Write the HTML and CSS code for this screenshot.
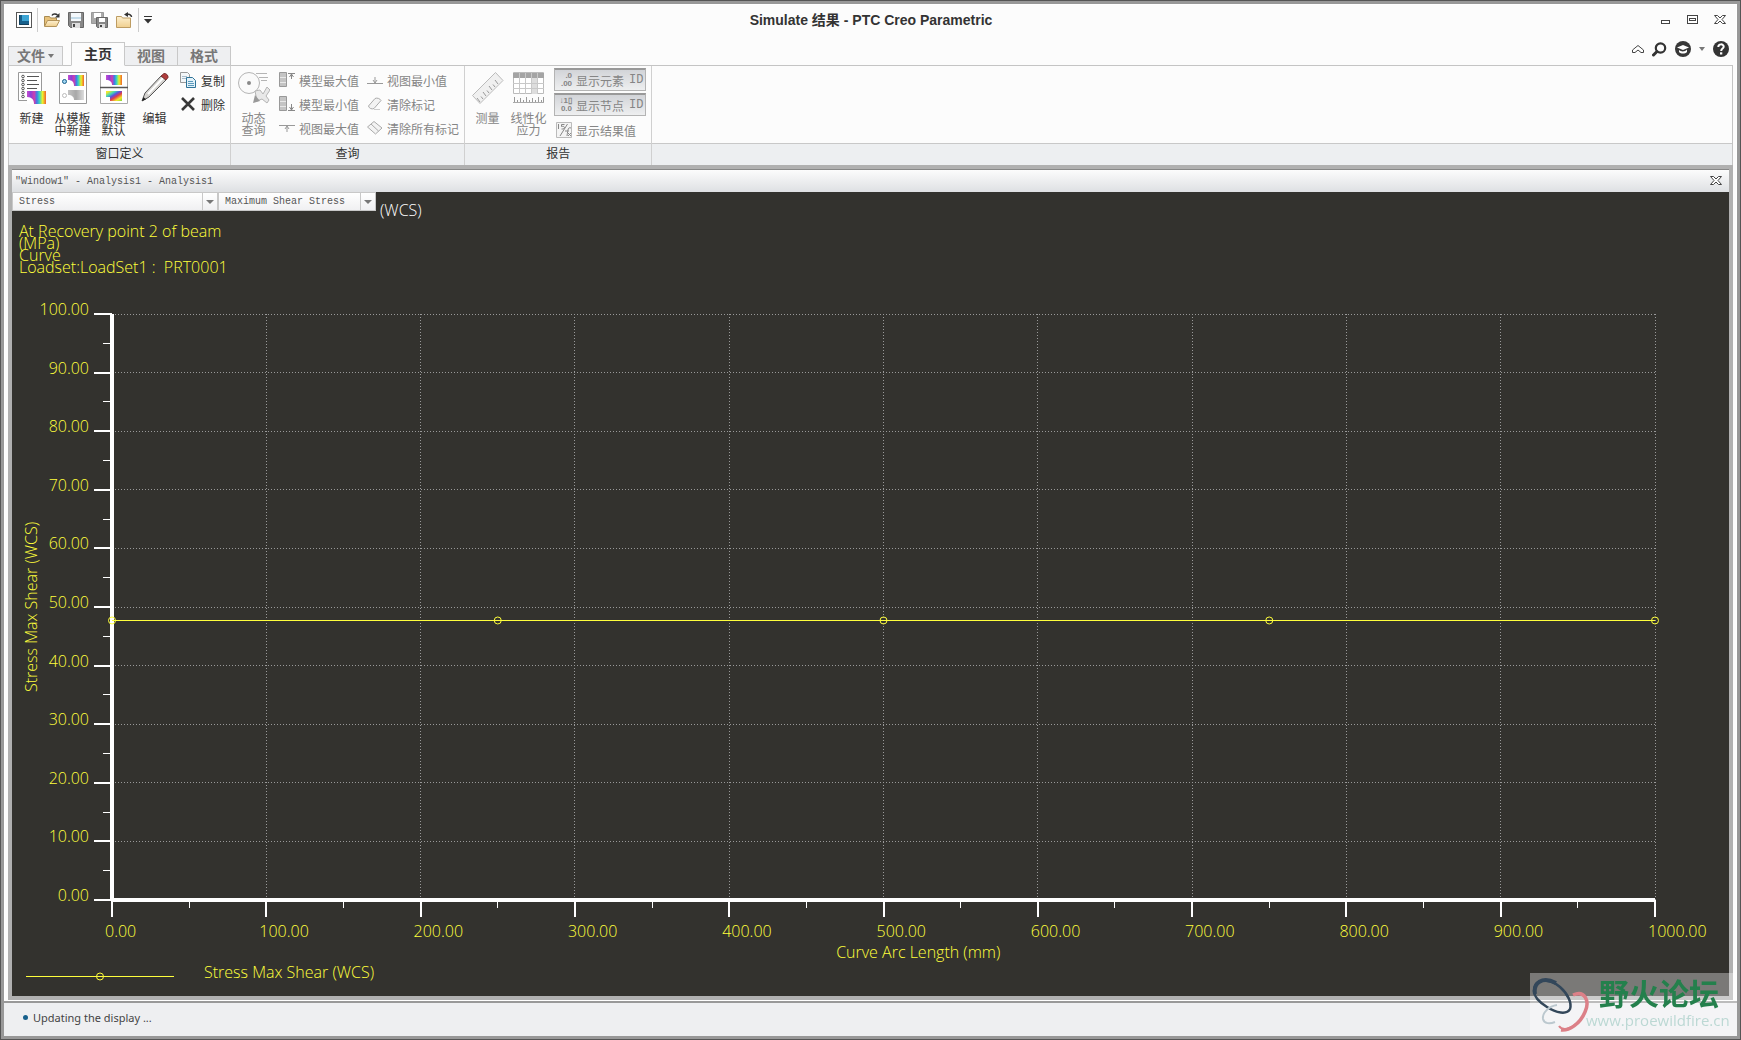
FILE: index.html
```
<!DOCTYPE html>
<html lang="zh-CN">
<head>
    <meta charset="UTF-8">
    <meta name="viewport" content="width=device-width, initial-scale=1.0">
    <title>Simulate 结果 - PTC Creo Parametric</title>
    <link rel="stylesheet" href="styles.css">
</head>
<body>
    <svg class="defs" width="0" height="0" aria-hidden="true">
        <defs>
            <linearGradient id="rainbow" x1="0" y1="0" x2="1" y2="0">
                <stop offset="0" stop-color="#c84fd0"/>
                <stop offset=".2" stop-color="#8a3fd8"/>
                <stop offset=".38" stop-color="#d23cae"/>
                <stop offset=".52" stop-color="#3f7be8"/>
                <stop offset=".66" stop-color="#3fd6b8"/>
                <stop offset=".82" stop-color="#eef02c"/>
                <stop offset="1" stop-color="#f0622c"/>
            </linearGradient>
            <linearGradient id="rainbowTilt" x1="0" y1="0" x2="1" y2="1">
                <stop offset=".1" stop-color="#f4e62c"/>
                <stop offset=".3" stop-color="#3fd6b8"/>
                <stop offset=".45" stop-color="#5a4fe0"/>
                <stop offset=".6" stop-color="#e03c4c"/>
                <stop offset=".8" stop-color="#f4e62c"/>
                <stop offset="1" stop-color="#7fd63c"/>
            </linearGradient>
            <linearGradient id="grayFringe">
                <stop offset="0" stop-color="#c4c4c4"/>
                <stop offset=".5" stop-color="#a8a8a8"/>
                <stop offset="1" stop-color="#dcdcdc"/>
            </linearGradient>
            <linearGradient id="folder" x1="0" y1="0" x2="0" y2="1">
                <stop offset="0" stop-color="#fdf0d0"/>
                <stop offset="1" stop-color="#f0cf8e"/>
            </linearGradient>
        </defs>
    </svg>

    <div class="app">
        <header class="titlebar">
            <div class="quick">
                <button class="tool" aria-label="窗口"><svg width="16" height="16"><rect x=".5" y=".5" width="15" height="15" fill="#fff" stroke="#555"/><rect x="3" y="3" width="10" height="10" fill="#17608c"/><path d="M6 3h7v6H6z" fill="#3ba4d4"/><path d="M3.500 3v9.500H13" stroke="#14405c" fill="none"/></svg></button>
                <span class="sep"></span>
                <button class="tool" aria-label="打开"><svg width="18" height="16"><path d="M1.500 14V4.500h5l1 1.500h6v2" fill="#e8c27a" stroke="#a98b52"/><path d="M1.500 14.500l3-6h12l-3 6z" fill="url(#folder)" stroke="#b3935a"/><path d="M9 3.500c1-2 4-2 5.500-.5" fill="none" stroke="#333" stroke-width="1.500"/><path d="M16.500 1v4.500h-4.500z" fill="#333"/></svg></button>
                <button class="tool" aria-label="保存"><svg width="16" height="16"><path d="M.5.500h15v15h-13l-2-2z" fill="#888" stroke="#666"/><path d="M3 1h10v8H3z" fill="#f5f9fc"/><path d="M3 5h10v2H3z" fill="#c5dcea"/><path d="M4 11h8v5H4z" fill="#ddd"/><path d="M5 12h2v3H5z" fill="#444"/></svg></button>
                <button class="tool" aria-label="保存副本"><svg width="18" height="16"><path d="M.5.500h12v11H.500z" fill="#aaa" stroke="#999"/><path d="M3 1h7v5H3z" fill="#fff"/><path d="M5.500 5.500h11v10h-10l-1-1z" fill="#888" stroke="#666"/><path d="M8 6h6v4H8z" fill="#fff"/><path d="M8 12h6v4H8z" fill="#ddd"/><path d="M9 13h2v2H9z" fill="#444"/></svg></button>
                <button class="tool" aria-label="关闭文件"><svg width="17" height="16"><path d="M.5 15.500V4.500h5l1 1.500h8v9.500z" fill="url(#folder)" stroke="#bd9c62"/><path d="M15.500 5c0-2-2-3-4-2.500" fill="none" stroke="#333" stroke-width="1.500"/><path d="M12 0v5L8 2.500z" fill="#333"/></svg></button>
                <span class="sep"></span>
                <button class="tool" aria-label="自定义"><svg width="8" height="8"><path d="M0 .5h8" stroke="#333"/><path d="M0 3h8L4 7.500z" fill="#333"/></svg></button>
            </div>
            <h1>Simulate 结果 - PTC Creo Parametric</h1>
            <div class="window-buttons">
                <button aria-label="最小化"><svg width="11" height="10"><rect x="1.500" y="5.500" width="8" height="3" fill="#fff" stroke="#444"/></svg></button>
                <button aria-label="最大化"><svg width="11" height="10"><rect x=".5" y=".5" width="10" height="8" fill="#fff" stroke="#444"/><rect x="2.500" y="3.500" width="6" height="2" fill="none" stroke="#444"/></svg></button>
                <button aria-label="关闭"><svg width="12" height="10"><path d="M.5.500h3L6 3 8.500.500h3L8 4.500l3.500 4h-3L6 6 3.500 8.500h-3l3.500-4z" fill="#fff" stroke="#444"/></svg></button>
            </div>
        </header>

        <nav class="tabs">
            <button class="tab file">文件<span class="caret"></span></button>
            <button class="tab active">主页</button>
            <button class="tab">视图</button>
            <button class="tab">格式</button>
            <div class="help">
                <button aria-label="折叠功能区"><svg width="12" height="9"><path d="M.5 5L6 .500 11.500 5v2.500H9L6 5 3 7.500H.500z" fill="#fff" stroke="#444"/></svg></button>
                <button aria-label="搜索"><svg width="15" height="15"><circle cx="8.500" cy="6" r="4.700" fill="none" stroke="#333" stroke-width="2.200"/><path d="M5 9.500L1.500 13" stroke="#333" stroke-width="3" stroke-linecap="round"/></svg></button>
                <button aria-label="学习"><svg width="16" height="16"><circle cx="8" cy="8" r="8" fill="#383838"/><path d="M2 6.500L8 4l6 2.500L8 9z" fill="#fff"/><path d="M4 9c2 2 6 2 8-.500v2.500c-2 2-6 2-8 0z" fill="#fff"/></svg></button>
                <button aria-label="更多"><span class="caret"></span></button>
                <button aria-label="帮助"><svg width="16" height="16"><circle cx="8" cy="8" r="8" fill="#333"/><path d="M5.300 6c0-3.500 5.400-3.400 5.400-.3C10.700 7.700 8.200 7.500 8.200 10" fill="none" stroke="#fff" stroke-width="2"/><rect x="7" y="11.300" width="2.300" height="2.200" fill="#fff"/></svg></button>
            </div>
        </nav>

        <section class="ribbon">
            <div class="group">
                <div class="tools">
                    <button class="big"><svg width="28" height="32"><path d="M.5.500h23v28H.500z" fill="#fff" stroke="#999"/><g fill="none" stroke="#555"><circle cx="5" cy="4.500" r="1.300"/><circle cx="5" cy="8.500" r="1.300"/><circle cx="5" cy="12.500" r="1.300"/><circle cx="5" cy="16.500" r="1.300"/><circle cx="5" cy="20.500" r="1.300"/><circle cx="5" cy="24.500" r="1.300"/><path d="M9 4.500h12M9 8.500h10M9 12.500h12M9 16.500h10M9 20.500h4"/></g><path d="M9 19h19v13H9z" fill="url(#rainbow)"/><path d="M9 32v-7c5 0 7 3 7 7z" fill="#fff"/></svg><span>新建</span></button>
                    <button class="big"><svg width="28" height="32"><path d="M.5.500h27v31H.500z" fill="#fff" stroke="#999"/><circle cx="5.500" cy="9.500" r="2" fill="#9fd4f0" stroke="#17608c"/><circle cx="5.500" cy="23.500" r="2" fill="#fff" stroke="#bbb"/><path d="M9 3h16v11H9z" fill="url(#rainbow)"/><path d="M9 14V8c4 0 6 2 6 6z" fill="#fff"/><path d="M9 18h16v10H9z" fill="url(#grayFringe)"/><path d="M9 28v-5c4 0 6 2 6 5z" fill="#fff"/></svg><span>从模板<br>中新建</span></button>
                    <button class="big"><svg width="28" height="32"><path d="M.5.500h27v31H.500z" fill="#fff" stroke="#aaa"/><path d="M0 15.500h28" stroke="#555" stroke-width="1.500"/><path d="M6 3h16v10H6z" fill="url(#rainbow)"/><path d="M6 13V8c4 0 6 2 6 5z" fill="#fff"/><path d="M6 19h16v10H6z" fill="url(#rainbowTilt)"/><path d="M6 29v-4h4v4z" fill="#fff"/></svg><span>新建<br>默认</span></button>
                    <button class="big"><svg width="28" height="32"><path d="M1 29l3-8L20 4l5 4L8 25z" fill="#d4d2cf" stroke="#555"/><path d="M7 22L22 6" stroke="#fff" stroke-width="2"/><path d="M20 4l3-2.500c2-.5 4.500 2 4 4L25 8z" fill="#b03c3c" stroke="#7c3434"/><path d="M1 29l1.500-4 2.500 2.500z" fill="#222"/></svg><span>编辑</span></button>
                    <div class="column">
                        <button class="small"><svg width="17" height="17"><path d="M.5.500h7l2 2v8h-9z" fill="#f4f7f9" stroke="#999"/><path d="M2 4.500h5M2 6.500h5" stroke="#a8bccb"/><path d="M6.500 5.500h6l3 3v7h-9z" fill="#e2f1f9" stroke="#2f7398"/><path d="M8 9.500h5M8 11.500h6M8 13.500h6" stroke="#5b9abc"/></svg>复制</button>
                        <button class="small"><svg width="17" height="16"><path d="M2 2l12 12M14 2L2 14" stroke="#383838" stroke-width="2.600"/></svg>删除</button>
                    </div>
                </div>
                <div class="caption">窗口定义</div>
            </div>

            <div class="group query">
                <div class="tools">
                    <button class="big" disabled><svg width="32" height="32"><circle cx="11" cy="11" r="10.500" fill="#fafafa" stroke="#b5b5b5"/><circle cx="11" cy="11" r="2" fill="#888"/><path d="M18 1.500h11M21 5.500h9M23 8.500h6" stroke="#b5b5b5"/><path d="M17 19l5-1 3 4 4-7 3 3-4 6 3 4-2 3-5-4-5 2z" fill="#e8e8e8" stroke="#b5b5b5"/><path d="M15 31l2-8 5 6z" fill="#999"/></svg><span>动态<br>查询</span></button>
                    <div class="column">
                        <button class="small" disabled><svg width="16" height="16"><path d="M.5.500h7v14h-7z" fill="#c4c4c4" stroke="#999"/><path d="M1 5.500h6M1 10.500h6" stroke="#e8e8e8"/><path d="M9 1.500h7M12.500 2v5M10.500 5l2-3 2 3" fill="none" stroke="#888"/></svg>模型最大值</button>
                        <button class="small" disabled><svg width="16" height="16"><path d="M.5.500h7v14h-7z" fill="#c4c4c4" stroke="#999"/><path d="M1 5.500h6M1 10.500h6" stroke="#e8e8e8"/><path d="M9 14.500h7M12.500 8v6M10.500 11l2 3 2-3" fill="none" stroke="#888"/></svg>模型最小值</button>
                        <button class="small" disabled><svg width="16" height="12"><path d="M0 3.500h16M8 4v6M6 7l2-3 2 3" fill="none" stroke="#999"/></svg>视图最大值</button>
                    </div>
                    <div class="column">
                        <button class="small" disabled><svg width="16" height="12"><path d="M0 9.500h16M8 3v6M6 6l2 3 2-3" fill="none" stroke="#999"/></svg>视图最小值</button>
                        <button class="small" disabled><svg width="16" height="16"><path d="M1.500 10L8 2.500c2-1 5 0 6 2L7 12.500c-2 1-5 0-5.500-2.500z" fill="#f3f3f3" stroke="#aaa"/><path d="M7 13.500h6" stroke="#ccc"/></svg>清除标记</button>
                        <button class="small" disabled><svg width="16" height="16"><path d="M.5 7L7 1.500 15 8l-6.500 6z" fill="#f3f3f3" stroke="#aaa"/><path d="M4 4l7.500 7" stroke="#aaa"/></svg>清除所有标记</button>
                    </div>
                </div>
                <div class="caption">查询</div>
            </div>

            <div class="group">
                <div class="tools">
                    <button class="big" disabled><svg width="32" height="32"><path d="M.5 23.500l23-23 7.500 8-23 23z" fill="#f0f0f0" stroke="#bbb"/><path d="M8 30l-3-4M11 27l-2-2.500M14 24l-3-4M17 21l-2-2.500M20 18l-3-4M23 15l-2-2.500M26 12l-3-4" stroke="#999"/></svg><span>测量</span></button>
                    <button class="big" disabled><svg width="32" height="32"><path d="M.5.500h30v21H.500z" fill="#fff" stroke="#bbb"/><path d="M19 6h6v16h-6z" fill="#ddd"/><path d="M0 1h31v5H0z" fill="#a4a4a4"/><path d="M0 11.500h31M0 16.500h31M6.500 1v21M12.500 1v21M18.500 1v21M24.500 1v21" stroke="#c8c8c8"/><path d="M0 30.500h31" stroke="#aaa"/><path d="M1.500 25v5M4.500 28v2M7.500 26v4M10.500 28v2M13.500 25v5M16.500 28v2M19.500 26v4M22.500 28v2M25.500 25v5M28.500 28v2M30.500 25v5" stroke="#999"/></svg><span>线性化<br>应力</span></button>
                    <div class="column">
                        <button class="small toggle" disabled><span class="digits">.0<br>.00</span>显示元素<span class="id">ID</span></button>
                        <button class="small toggle" disabled><span class="digits">↓1▯<br>0.0</span>显示节点<span class="id">ID</span></button>
                        <button class="small plain" disabled><svg width="16" height="16"><path d="M.5.500h15v15H.500z" fill="#f4f4f4" stroke="#bbb"/><path d="M2.500 2v5M8.500 2.500H5.500v2c4-1 4 3 0 2.500M11.500 2L4 14M15 6c-3-1-3 1-4 8M9 9h4M12 11l3 3M15 11l-3 3" fill="none" stroke="#888"/></svg>显示结果值</button>
                    </div>
                </div>
                <div class="caption">报告</div>
            </div>
            <div class="group rest"><div class="tools"></div><div class="caption"></div></div>
        </section>

        <main class="workspace">
            <div class="result">
                <div class="result-title">
                    <h2>"Window1" - Analysis1 - Analysis1</h2>
                    <button aria-label="关闭窗口"><svg width="12" height="10"><path d="M.5.500h3L6 3 8.500.500h3L8 4.500l3.500 4h-3L6 6 3.500 8.500h-3l3.500-4z" fill="#fff" stroke="#444"/></svg></button>
                </div>
                <div class="canvas">
                    <div class="pickers">
                        <div class="picker quantity"><select aria-label="Quantity"><option>Stress</option></select></div>
                        <div class="picker component"><select aria-label="Component"><option>Maximum Shear Stress</option></select></div>
                        <span class="wcs">(WCS)</span>
                    </div>
                    <div class="info">At Recovery point 2 of beam<br>(MPa)<br>Curve<br>Loadset:LoadSet1 :&nbsp; PRT0001</div>
                    <div class="chart">
                        <div class="y-title">Stress Max Shear (WCS)</div>
                        <svg class="plot" id="plot"></svg>
                    </div>
                    <div class="x-title">Curve Arc Length (mm)</div>
                    <div class="legend">
                        <svg width="148" height="9"><path d="M0 4.500h148" stroke="#ffff3c"/><circle cx="74" cy="4.500" r="3.500" fill="none" stroke="#ffff3c"/></svg>
                        <span>Stress Max Shear (WCS)</span>
                    </div>
                </div>
            </div>
        </main>

        <footer class="status"><span class="dot"></span>Updating the display ...</footer>
    </div>

    <div class="watermark">
        <svg width="58" height="56" viewBox="0 0 58 56" fill="none"><path d="M2 14C2 2 16 0 28 10c8 7 12 16 10 22-3 6-14 4-23-2C7 25 2 20 2 14z" stroke="#33475a" stroke-width="2.500"/><path d="M3 17C1 6 10-1 24 6" stroke="#33475a" stroke-width="4"/><path d="M41 18c12-5 17 6 12 17-5 12-16 19-24 18" stroke="#dc8088" stroke-width="3.500"/><path d="M27 49c3 5 12 3 17-2" stroke="#dc8088" stroke-width="2"/><path d="M25 28c-8 1-15 8-14 14 1 5 7 5 12 3" stroke="#bcc8cf" stroke-width="2"/></svg>
        <div class="brand"><strong>野火论坛</strong><span>www.proewildfire.cn</span></div>
    </div>

    <script>
        const points = [[0, 47.7], [250, 47.7], [500, 47.7], [750, 47.7], [1000, 47.7]];
        const maxX = 1000;
        const maxY = 100;
        let svg = '';

        // each tick is a nested svg, so its marks keep their size when the plot stretches
        for (let v = 0; v <= maxX; v += 50) {
            const x = v / maxX * 100 + '%';
            if (v % 100 === 0) {
                if (v > 0) svg += `<line class="grid" x1="${x}" x2="${x}" y1="0" y2="100%"/>`;
                svg += `<svg x="${x}" y="100%"><line class="major" y2="17"/><text x="-7" y="37">${v.toFixed(2)}</text></svg>`;
            } else {
                svg += `<svg x="${x}" y="100%"><line class="minor" y2="8"/></svg>`;
            }
        }
        for (let v = 0; v <= maxY; v += 5) {
            const y = 100 - v / maxY * 100 + '%';
            if (v % 10 === 0) {
                if (v > 0) svg += `<line class="grid" x1="0" x2="100%" y1="${y}" y2="${y}"/>`;
                svg += `<svg y="${y}"><line class="major" x1="-18"/><text class="y-label" x="-23" y="1">${v.toFixed(2)}</text></svg>`;
            } else {
                svg += `<svg y="${y}"><line class="minor" x1="-9"/></svg>`;
            }
        }
        svg += '<line class="axis" x1="0" x2="0" y1="0" y2="100%"/>';
        svg += '<line class="axis" x1="0" x2="100%" y1="100%" y2="100%"/>';

        points.forEach((p, i) => {
            const x = p[0] / maxX * 100 + '%';
            const y = 100 - p[1] / maxY * 100 + '%';
            const next = points[i + 1];
            if (next) {
                svg += `<line class="curve" x1="${x}" y1="${y}" x2="${next[0] / maxX * 100}%" y2="${100 - next[1] / maxY * 100}%"/>`;
            }
            svg += `<circle class="point" cx="${x}" cy="${y}" r="3.5"/>`;
        });
        document.getElementById('plot').innerHTML = svg;
    </script>
</body>
</html>
```
FILE: styles.css
```
* {
    box-sizing: border-box;
}

body {
    margin: 0;
    font-family: "Liberation Sans", "Noto Sans CJK SC", sans-serif;
    font-size: 12px;
    color: #333;
}

button {
    font: inherit;
    color: inherit;
    background: none;
    border: none;
    padding: 0;
}

svg {
    display: block;
    flex: none;
}

.defs {
    position: absolute;
}

.app {
    display: flex;
    flex-direction: column;
    min-height: 100vh;
    background: #fcfcfc;
    border: 4px solid #989898;
    box-shadow: inset 0 0 0 1px #fff;
    outline: 1px solid #555;
    outline-offset: -1px;
}

/* title bar */
.titlebar {
    display: grid;
    grid-template-columns: 1fr auto 1fr;
    align-items: center;
    height: 32px;
    padding: 0 11px 0 12px;
}

.titlebar h1 {
    margin: 0;
    font-size: 14px;
    font-weight: bold;
    line-height: 20px;
}

.quick {
    display: flex;
    align-items: center;
    gap: 7px;
}

.sep {
    width: 1px;
    height: 24px;
    margin: 0 -2px;
    background: #ccc;
}

.window-buttons {
    display: flex;
    justify-content: flex-end;
    gap: 16px;
}

/* tabs */
.tabs {
    display: flex;
    align-items: flex-end;
    height: 30px;
    padding: 0 4px;
    position: relative;
    z-index: 1;
}

.tab {
    height: 20px;
    padding: 0 12px;
    font-size: 14px;
    font-weight: bold;
    line-height: 18px;
    color: #777;
    background: #eeeff1;
    border: 1px solid #c8c8c8;
    border-left: none;
}

.tab.file {
    display: flex;
    align-items: center;
    gap: 3px;
    padding: 0 8px;
    margin-right: 8px;
    border-left: 1px solid #c8c8c8;
}

.tab.active {
    height: 24px;
    line-height: 22px;
    color: #333;
    background: #fcfcfc;
    border-left: 1px solid #c8c8c8;
    border-bottom-color: #fcfcfc;
}

.caret {
    display: block;
    border: 3px solid transparent;
    border-top: 4px solid #777;
    border-bottom: none;
}

.help {
    display: flex;
    align-items: center;
    gap: 8px;
    margin-left: auto;
    padding-right: 4px;
    height: 34px;
}

/* ribbon */
.ribbon {
    display: flex;
    margin: -1px 4px 0;
    border: 1px solid #c4c4c4;
    border-bottom: none;
}

.group {
    display: flex;
    flex-direction: column;
    border-right: 1px solid #d0d0d0;
}

.group.rest {
    flex: 1;
    border-right: none;
}

.tools {
    display: flex;
    height: 77px;
    padding: 2px 5px 0 2px;
}

.caption {
    height: 22px;
    line-height: 20px;
    text-align: center;
    background: #edeff1;
    border-top: 1px solid #c8c8c8;
}

.big {
    display: flex;
    flex-direction: column;
    align-items: center;
    gap: 9px;
    min-width: 41px;
    padding: 4px 2px 0;
    line-height: 12px;
}

.column {
    display: flex;
    flex-direction: column;
    padding-left: 5px;
}

.query .column + .column {
    padding-left: 8px;
}

.small {
    display: flex;
    align-items: center;
    gap: 4px;
    height: 24px;
    white-space: nowrap;
}

button:disabled {
    color: #858585;
}

.small.toggle {
    height: 23px;
    margin-bottom: 2px;
    padding: 0 2px 0 1px;
    background: linear-gradient(#d2d4d8, #eeeff0);
    border: 1px solid #b4b4b4;
    border-top: 2px solid #999;
}

.small.plain {
    padding-left: 2px;
}

.digits {
    width: 16px;
    font-size: 8px;
    font-weight: bold;
    line-height: 8px;
    text-align: right;
}

.id {
    margin-left: 1px;
    font-family: "Liberation Mono", monospace;
}

/* result window */
.workspace {
    display: flex;
    flex: 1;
    margin: 0 4px;
    padding: 4px;
    background: #b0b0b0;
    border-bottom: 1px solid #fff;
}

.result {
    display: flex;
    flex: 1;
    flex-direction: column;
    border-top: 1px solid #888;
}

.result-title {
    display: flex;
    align-items: center;
    justify-content: space-between;
    height: 22px;
    padding: 0 7px 0 3px;
    background: linear-gradient(#fcfcfc, #dee0e3);
}

.result-title h2 {
    margin: 0;
    font-family: "Liberation Mono", monospace;
    font-size: 10px;
    font-weight: normal;
    color: #555;
}

.canvas {
    display: flex;
    flex: 1;
    flex-direction: column;
    font-family: "Open Sans", sans-serif;
    font-size: 16px;
    font-weight: 300;
    color: #ffff3c;
    background: #33322e;
}

.pickers {
    display: flex;
    height: 30px;
}

.picker {
    position: relative;
    height: 19px;
}

.picker select {
    display: block;
    width: 100%;
    height: 19px;
    padding: 0 6px;
    font-family: "Liberation Mono", monospace;
    font-size: 10px;
    color: #555;
    appearance: none;
    background: linear-gradient(#fff, #f0f0f2);
    border: 1px solid #c8c8c8;
    border-radius: 0;
}

.picker::after {
    content: "";
    position: absolute;
    top: 8px;
    right: 4px;
    border: 4px solid transparent;
    border-top: 4px solid #777;
    border-bottom: none;
    pointer-events: none;
}

.picker::before {
    content: "";
    position: absolute;
    top: 1px;
    right: 15px;
    width: 1px;
    height: 17px;
    background: #c8c8c8;
}

.quantity {
    width: 206px;
}

.component {
    width: 158px;
}

.wcs {
    margin-left: 4px;
    line-height: 36px;
    color: #fff;
}

.info {
    padding: 3px 7px 0;
    line-height: 12px;
}

.chart {
    display: flex;
    flex: 1;
    min-height: 200px;
    padding: 41px 74px 0 7px;
}

.y-title {
    width: 24px;
    margin-right: 69px;
    line-height: 24px;
    text-align: center;
    writing-mode: vertical-rl;
    transform: rotate(180deg);
}

.plot {
    flex: 1;
    width: 100%;
    height: auto;
    min-width: 0;
    overflow: visible;
}

.plot svg {
    overflow: visible;
}

.plot line {
    stroke: #fff;
    shape-rendering: crispEdges;
}

.plot .grid {
    stroke: #999;
    stroke-dasharray: 1 2;
}

.plot .major {
    stroke-width: 2;
}

.plot .axis {
    stroke-width: 4;
}

.plot .curve {
    stroke: #ffff3c;
}

.plot .point {
    fill: none;
    stroke: #ffff3c;
}

.plot text {
    fill: #ffff3c;
}

.plot .y-label {
    text-anchor: end;
}

.x-title {
    padding: 42px 0 0 48%;
    line-height: 20px;
}

.legend {
    display: flex;
    align-items: center;
    gap: 30px;
    height: 34px;
    padding: 0 14px 14px;
}

.legend svg {
    margin-top: 8px;
}

/* status bar */
.status {
    display: flex;
    align-items: center;
    gap: 5px;
    height: 35px;
    padding: 0 19px 4px;
    font-family: "Noto Sans", sans-serif;
    font-size: 11px;
    color: #444;
    background: #eeeff1;
    border-top: 2px solid #999;
}

.dot {
    width: 5px;
    height: 5px;
    border-radius: 50%;
    background: #17608c;
}

/* forum mark over the bottom right corner */
.watermark {
    position: fixed;
    right: 4px;
    bottom: 4px;
    display: flex;
    width: 207px;
    height: 63px;
    padding: 4px 0 0 2px;
    background: rgba(255, 255, 255, .35);
}

.brand {
    display: flex;
    flex-direction: column;
    margin-left: -4px;
}

.brand strong {
    padding-left: 13px;
    font-family: "Noto Sans CJK SC", sans-serif;
    font-size: 30px;
    line-height: 30px;
    color: #24804c;
}

.brand span {
    font-family: "Open Sans", sans-serif;
    font-size: 15px;
    line-height: 26px;
    color: #bcd8d4;
}
```
